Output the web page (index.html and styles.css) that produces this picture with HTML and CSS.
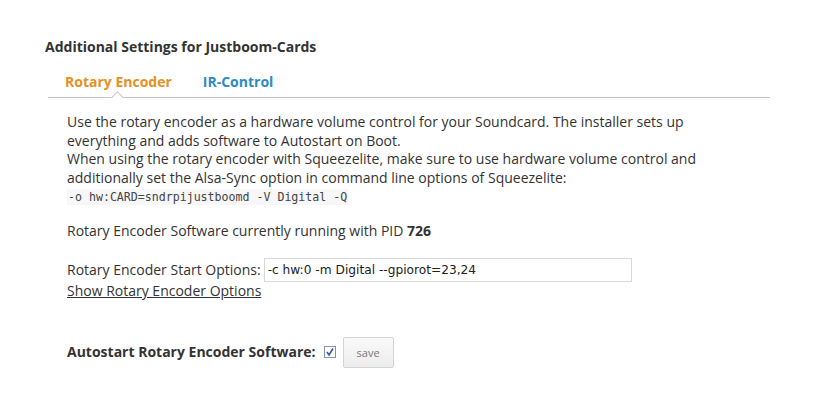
FILE: index.html
```html
<!DOCTYPE html>
<html>
<head>
<meta charset="utf-8">
<link rel="stylesheet" href="styles.css">
</head>
<body>
<div class="panel">
  <h3 class="title">Additional Settings for Justboom-Cards</h3>
  <div class="tabs">
    <a class="tab active">Rotary Encoder</a>
    <a class="tab">IR-Control</a>
  </div>
  <div class="content">
    <p class="desc">Use the rotary encoder as a hardware volume control for your Soundcard. The installer sets up everything and adds software to Autostart on Boot.<br>When using the rotary encoder with Squeezelite, make sure to use hardware volume control and additionally set the Alsa-Sync option in command line options of Squeezelite:<br><code class="code">-o hw:CARD=sndrpijustboomd -V Digital -Q</code></p>
    <p class="status">Rotary Encoder Software currently running with PID <b>726</b></p>
    <div class="opts">
      <label class="opt-label">Rotary Encoder Start Options: <input class="opt-input" type="text" value="-c hw:0 -m Digital --gpiorot=23,24"></label>
      <a class="opt-link">Show Rotary Encoder Options</a>
    </div>
    <div class="autostart">
      <span class="auto-label">Autostart Rotary Encoder Software:</span>
      <span class="check"><svg width="12" height="12" viewBox="0 0 12 12"><rect x="0.5" y="0.5" width="11" height="11" fill="#fff" stroke="#8a94a8"/><path d="M3 6 L5 9 L9 2.5" fill="none" stroke="#3a5aa0" stroke-width="1.6"/></svg></span>
      <button class="save">save</button>
    </div>
  </div>
</div>
</body>
</html>
```
FILE: styles.css
```css
html, body { margin: 0; padding: 0; background: #fff; }
body { font-family: "Open Sans", sans-serif; color: #333; }
.panel { padding: 38px 48px 0 45px; width: 725px; }
.title { margin: 0; font-size: 14px; font-weight: 700; line-height: 18px; color: #333; }
.tabs { position: relative; margin: 16px 0 0 3px; padding: 0 0 5px 17px; border-bottom: 1px solid #c4c4c4; display: flex; gap: 31px; }
.tab { font-size: 14px; font-weight: 700; line-height: 20px; color: #2d8ac7; }
.tab.active { color: #e88f1e; position: relative; }
.tab.active::after { content: ""; position: absolute; left: 48px; bottom: -10px; width: 8px; height: 8px; background: #fff; border-left: 1px solid #c4c4c4; border-top: 1px solid #c4c4c4; transform: rotate(45deg); }
.content { padding: 15px 0 0 22px; font-size: 14px; line-height: 18.5px; }
.desc { margin: 0; width: 650px; }
.code { font-family: "DejaVu Sans Mono", monospace; font-size: 11.6px; background: #f7f7f7; color: #444; padding: 1px 1px; }
.status { margin: 15px 0 0; }
.status b { font-weight: 700; }
.opts { margin-top: 18px; display: flex; flex-direction: column; align-items: flex-start; }
.opt-label { display: flex; align-items: center; gap: 3px; }
.opt-input { width: 368px; height: 24px; box-sizing: border-box; border: 1px solid #d8d8d8; font-family: "DejaVu Sans", sans-serif; font-size: 12.2px; padding: 0 3px; color: #222; margin: 0; }
.opt-link { text-decoration: underline; color: #333; margin-top: 0; }
.autostart { margin-top: 36px; display: flex; align-items: center; }
.auto-label { font-weight: 700; }
.check { display: flex; margin-left: 8px; }
.save { margin-left: 7px; width: 51px; height: 31px; font-family: "Open Sans", sans-serif; font-size: 11px; color: #777; background: linear-gradient(#fafafa, #ececec); border: 1px solid #d3d3d3; border-radius: 2px; padding: 0; }
```
